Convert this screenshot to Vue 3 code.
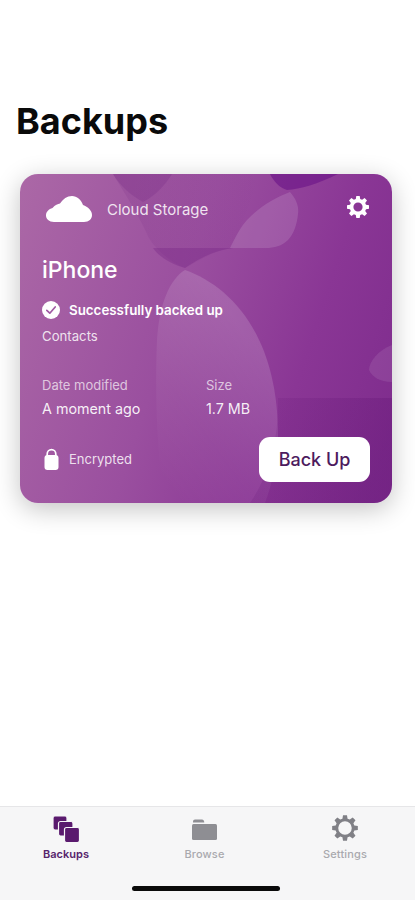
<script setup>
const tabs = [
  { label: 'Backups', active: true, icon: 'stack' },
  { label: 'Browse', active: false, icon: 'folder' },
  { label: 'Settings', active: false, icon: 'gear' },
]
const teeth = 'M10.3 1h3.4l.5 3 1.9.8 2.5-1.8 2.4 2.4-1.8 2.5.8 1.9 3 .5v3.4l-3 .5-.8 1.9 1.8 2.5-2.4 2.4-2.5-1.8-1.9.8-.5 3h-3.4l-.5-3-1.9-.8-2.5 1.8-2.4-2.4 1.8-2.5-.8-1.9-3-.5v-3.4l3-.5.8-1.9-1.8-2.5 2.4-2.4 2.5 1.8 1.9-.8z'
const gear = teeth + 'M12 7.400a4.600 4.600 0 1 0 0 9.200 4.600 4.600 0 0 0 0-9.200z'
const gearOpen = teeth + 'M12 6.200a5.800 5.800 0 1 0 0 11.600 5.800 5.800 0 0 0 0-11.600z'
</script>

<template>
  <div class="screen">
    <h1 class="title">Backups</h1>

    <section class="card">
      <svg class="art" viewBox="0 0 372 329" preserveAspectRatio="none" aria-hidden="true">
        <defs>
          <linearGradient id="circleFade" x1="0.05" y1="0.9" x2="0.55" y2="0.15">
            <stop offset="0" stop-color="#fff" stop-opacity="0" />
            <stop offset=".4" stop-color="#fff" stop-opacity=".05" />
            <stop offset="1" stop-color="#fff" stop-opacity=".15" />
          </linearGradient>
          <linearGradient id="midFade" x1="0" y1="0" x2="1" y2="0">
            <stop offset="0" stop-color="#5f1272" stop-opacity=".12" />
            <stop offset="1" stop-color="#5f1272" stop-opacity="0" />
          </linearGradient>
          <linearGradient id="cornerFade" x1="0" y1="0" x2="1" y2="0.3">
            <stop offset="0" stop-color="#5f1272" stop-opacity=".1" />
            <stop offset="1" stop-color="#5f1272" stop-opacity=".3" />
          </linearGradient>
        </defs>
        <path d="M93 0C105 20 118 40 127 60C133 74 150 88 165 94C185 84 195 76 213 74L240 0Z" fill="url(#midFade)" />
        <path d="M93 0C100 12 112 22 123 28C135 22 146 10 152 0Z" fill="#6f1f80" fill-opacity=".22" />
        <path d="M133 74C140 84 152 90 165 94C180 84 195 76 213 74Z" fill="#6f1f80" fill-opacity=".3" />
        <path d="M250 0C254 8 260 14 267 16C280 15 298 10 318 0Z" fill="#6a1488" fill-opacity=".62" />
        <path d="M210 74C216 62 220 54 227 46C238 34 254 24 270 18C277 26 279 33 278 40C277 50 274 60 268 66C262 72 254 74 246 74Z" fill="#fff" fill-opacity=".13" />
        <path d="M137 166C139 130 150 105 165 96C210 112 258 160 258 262C258 285 252 310 245 329H145C136 280 135 210 137 166Z" fill="url(#circleFade)" />
        <path d="M372 171C358 176 349 188 349 196C352 203 360 208 372 208Z" fill="#fff" fill-opacity=".09" />
        <path d="M258 224H372V329H230C250 300 259 262 258 224Z" fill="url(#cornerFade)" />
      </svg>

      <div class="card-body">
        <header class="card-head">
          <div class="provider">
            <svg class="cloud" viewBox="0 0 46 26" aria-hidden="true">
              <path d="M8 26C3 26 0 23 0 19.500C0 15.500 3 13 6.500 12C9 9 12 8 14 7.500C17 3 21 0 26 0C31 0 35 3.500 37 9C42 11 46 14.500 46 19C46 23 43 26 38 26Z" fill="#fff" />
            </svg>
            <span class="provider-name">Cloud Storage</span>
          </div>
          <svg class="gear" viewBox="0 0 24 24" aria-hidden="true">
            <path :d="gear" fill="#fff" fill-rule="evenodd" />
          </svg>
        </header>

        <h2 class="device">iPhone</h2>

        <div class="status">
          <svg class="check" viewBox="0 0 18 18" aria-hidden="true">
            <circle cx="9" cy="9" r="9" fill="#fff" />
            <path d="M4.800 9.400L7.800 12.200L13.200 6" fill="none" stroke="#a05aa3" stroke-width="1.700" stroke-linecap="round" stroke-linejoin="round" />
          </svg>
          <span>Successfully backed up</span>
        </div>
        <p class="scope">Contacts</p>

        <dl class="meta">
          <div class="meta-col date">
            <dt>Date modified</dt>
            <dd>A moment ago</dd>
          </div>
          <div class="meta-col">
            <dt>Size</dt>
            <dd>1.7 MB</dd>
          </div>
        </dl>

        <footer class="card-foot">
          <div class="lock">
            <svg class="lock-icon" viewBox="0 0 15 22" aria-hidden="true">
              <path d="M3.200 8V6a4.300 4.300 0 0 1 8.600 0V8" fill="none" stroke="#fff" stroke-width="1.700" />
              <rect x="0.500" y="7" width="14" height="15" rx="3" fill="#fff" />
            </svg>
            <span>Encrypted</span>
          </div>
          <button class="backup-btn" type="button">Back Up</button>
        </footer>
      </div>
    </section>

    <nav class="tabbar">
      <div class="tabs">
        <div v-for="tab in tabs" :key="tab.label" class="tab" :class="{ active: tab.active }">
          <svg v-if="tab.icon === 'stack'" class="tab-icon stack" viewBox="0 0 28 28" aria-hidden="true">
            <rect x="1" y="1" width="14" height="14" rx="2" fill="#5a1a6e" stroke="#f6f6f7" stroke-width="1.200" />
            <rect x="6.500" y="6.500" width="14.500" height="14.500" rx="2" fill="#5a1a6e" stroke="#f6f6f7" stroke-width="1.200" />
            <rect x="12.500" y="12.500" width="15" height="15" rx="2" fill="#5a1a6e" stroke="#f6f6f7" stroke-width="1.200" />
          </svg>
          <svg v-else-if="tab.icon === 'folder'" class="tab-icon folder" viewBox="0 0 25 21" aria-hidden="true">
            <path d="M1 3.500V2.500a2 2 0 0 1 2-2h7a2 2 0 0 1 2 1.500l.3 1.500H1z" fill="#8e8e93" />
            <rect x="0" y="5" width="25" height="16" rx="1.500" fill="#8e8e93" />
          </svg>
          <svg v-else class="tab-icon cog" viewBox="0 0 24 24" aria-hidden="true">
            <path :d="gearOpen" fill="#808086" fill-rule="evenodd" />
          </svg>
          <span class="tab-label">{{ tab.label }}</span>
        </div>
      </div>
      <div class="home-indicator"></div>
    </nav>
  </div>
</template>

<style>
html, body { margin: 0; background: #fff; }
</style>

<style scoped>
.screen {
  width: 415px;
  height: 900px;
  display: flex;
  flex-direction: column;
  background: #fff;
  font-family: Inter, "Liberation Sans", sans-serif;
  overflow: hidden;
}
.title {
  margin: 98px 0 0 16px;
  font-size: 36px;
  line-height: 46px;
  font-weight: 700;
  color: #0a0a0a;
  letter-spacing: 0;
}
.card {
  position: relative;
  margin: 30px 23px 0 20px;
  height: 329px;
  border-radius: 18px;
  overflow: hidden;
  background: linear-gradient(108deg, #ab68a6 0%, #9a4f9f 42%, #8a3695 72%, #7d2b8c 100%);
  box-shadow: 0 6px 26px rgba(0, 0, 0, .24);
  flex: none;
}
.art {
  position: absolute;
  inset: 0;
  width: 100%;
  height: 100%;
}
.card-body {
  position: relative;
  padding: 20px 22px 21px;
  height: 100%;
  box-sizing: border-box;
  display: flex;
  flex-direction: column;
  color: #fff;
}
.card-head {
  display: flex;
  justify-content: space-between;
  align-items: flex-start;
  height: 30px;
}
.provider {
  display: flex;
  align-items: center;
  padding: 2px 0 0 4px;
  gap: 15px;
}
.cloud { width: 46px; height: 26px; }
.provider-name {
  font-size: 15px;
  color: rgba(255, 255, 255, .86);
}
.gear { width: 24px; height: 24px; margin: 1px 0 0 0; }
.device {
  margin: 31px 0 0;
  font-size: 23px;
  line-height: 30px;
  font-weight: 500;
}
.status {
  display: flex;
  align-items: center;
  gap: 9px;
  margin-top: 16px;
  font-size: 13.350px;
  font-weight: 600;
  line-height: 18px;
}
.check { width: 18px; height: 18px; }
.scope {
  margin: 8px 0 0;
  font-size: 13.200px;
  line-height: 18px;
  color: rgba(255, 255, 255, .84);
}
.meta {
  display: flex;
  margin: 32px 0 0;
}
.meta-col { margin: 0; }
.meta-col.date { width: 164px; }
.meta dt {
  font-size: 13px;
  line-height: 16px;
  color: rgba(255, 255, 255, .68);
}
.meta dd {
  margin: 7px 0 0;
  font-size: 14.300px;
  line-height: 18px;
  color: rgba(255, 255, 255, .92);
}
.card-foot {
  margin-top: auto;
  display: flex;
  justify-content: space-between;
  align-items: center;
}
.lock {
  display: flex;
  align-items: center;
  gap: 10px;
  font-size: 13px;
  line-height: 20px;
  padding-bottom: 2px;
  color: rgba(255, 255, 255, .84);
}
.lock-icon { width: 15px; height: 22px; margin-left: 2px; }
.backup-btn {
  width: 111px;
  height: 45px;
  border: 0;
  border-radius: 11px;
  background: #fff;
  color: #4d1b5e;
  font-family: inherit;
  font-size: 18px;
  font-weight: 500;
  padding: 0;
}
.tabbar {
  margin-top: auto;
  height: 94px;
  flex: none;
  box-sizing: border-box;
  background: #f6f6f7;
  border-top: 1px solid #e6e6e8;
  display: flex;
  flex-direction: column;
  align-items: center;
}
.tabs {
  width: 100%;
  display: grid;
  grid-template-columns: 132px 1fr 138px;
  height: 79px;
}
.tabs .tab:last-child { padding-right: 2px; }
.tab {
  display: flex;
  flex-direction: column;
  align-items: center;
  color: #a9a9ae;
}
.tab.active { color: #57246b; }
.tab-icon { display: block; }
.stack { width: 28px; height: 28px; margin: 8px 0 0; }
.folder { width: 25px; height: 21px; margin: 12px 0 3px; }
.cog { width: 28px; height: 28px; margin: 7px 0 1px; }
.tab-label {
  margin-top: 4px;
  font-size: 11px;
  line-height: 14px;
  font-weight: 500;
  letter-spacing: .15px;
}
.tab.active .tab-label { font-weight: 600; letter-spacing: 0; }
.home-indicator {
  width: 148px;
  height: 5px;
  margin-right: 3px;
  border-radius: 3px;
  background: #0a0a0a;
}
</style>
